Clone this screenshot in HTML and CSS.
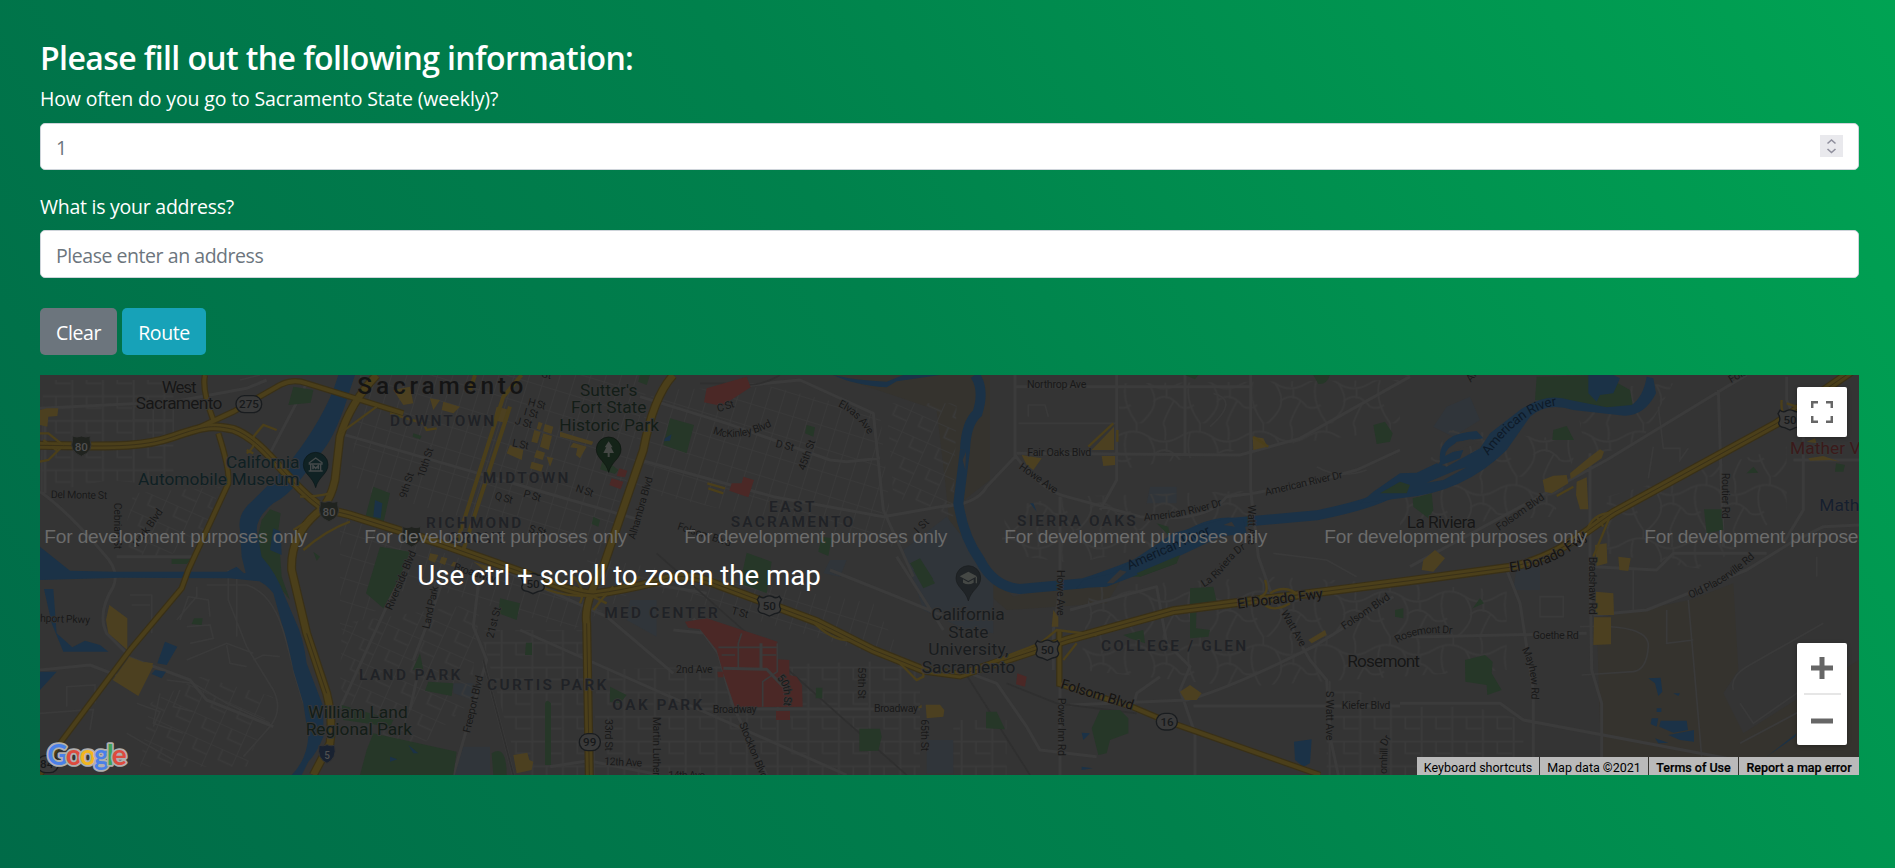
FILE: index.html
```html
<!DOCTYPE html>
<html lang="en">
<head>
<meta charset="utf-8">
<title>Commute survey</title>
<link rel="stylesheet" href="styles.css">
</head>
<body>
<main class="page">
  <h2 class="title">Please fill out the following information:</h2>
  <form class="form">
    <label class="label" for="often">How often do you go to Sacramento State (weekly)?</label>
    <div class="field">
      <input class="input" id="often" type="text" placeholder="1">
      <svg class="spinner" viewBox="0 0 23 22"><path d="M7.500 8.500 11.500 5l4 3.500M7.500 14l4 3.500 4-3.500"/></svg>
    </div>
    <label class="label second" for="address">What is your address?</label>
    <div class="field tall"><input class="input" id="address" type="text" placeholder="Please enter an address"></div>
    <div class="actions">
      <button class="btn btn-clear" type="button">Clear</button>
      <button class="btn btn-route" type="button">Route</button>
    </div>
  </form>
  <section class="map">
    <svg class="canvas" viewBox="0 15 5457 1200" preserveAspectRatio="none">
      <defs>
        <pattern id="grid" width="44" height="66" patternUnits="userSpaceOnUse" patternTransform="rotate(17)"><path class="st" d="M0 0H44M0 0V66"/></pattern>
        <pattern id="gridWide" width="92" height="74" patternUnits="userSpaceOnUse"><path class="st" d="M0 5H92M5 0V74M48 5V40H92"/></pattern>
        <pattern id="gridTilt" width="84" height="68" patternUnits="userSpaceOnUse" patternTransform="rotate(24)"><path class="st" d="M0 0H84M0 0V68M40 0V34H84"/></pattern>
        <pattern id="curvy" width="190" height="160" patternUnits="userSpaceOnUse"><path class="st" d="M0 40Q50 10 95 40T190 40M30 30Q10 90 60 160M60 0V25M95 40Q130 90 100 130T60 160M110 95Q150 60 190 110M0 110Q20 120 42 105M150 52V85M140 160Q150 130 172 92M140 0Q150 20 145 50"/></pattern>
        <g id="us50"><path class="shield" d="M-30-28Q-20-20-10-27 0-32 10-27 20-20 30-28L36-18Q26-4 34 10 34 22 16 24L0 31-16 24Q-34 22-34 10-26-4-36-18Z"/><text class="num" y="13" text-anchor="middle">50</text></g>
        <path id="inter" class="inter" d="M-27-30Q-13-24 0-30 13-24 27-30L26-20Q38 16 0 31-38 16-26-20Z"/>
        <g id="i80"><use href="#inter"/><text class="num on" y="14" text-anchor="middle">80</text></g>
        <path id="pin" d="M0 69C-8 36-37 28-37 0A37 37 0 0 1 37 0C37 28 8 36 0 69Z"/>
        <path id="mk" d="M2018 190Q2090 222 2204 164"/><path id="elvas" d="M2393 108Q2450 135 2485 194"/><path id="fif" d="M2210 925Q2240 950 2230 1006"/>
        <path id="ard" d="M3312 452Q3430 445 3550 405"/><path id="lar" d="M3492 652Q3530 630 3560 590T3620 535"/><path id="ar2" d="M4345 258Q4450 115 4555 106"/>
        <path id="eld" d="M4410 607Q4560 590 4652 492"/><path id="old" d="M4950 685Q5050 650 5150 558"/><path id="may" d="M4445 838Q4480 900 4473 990"/><path id="ros" d="M4072 820Q4130 780 4240 792"/>
      </defs>
      <rect class="land" y="15" width="5457" height="1200"/>

      <!-- tan and institutional ground -->
      <path class="tan" d="M2380 15H2850V330L2760 400 2790 560 2920 680 3260 600 3200 700 2900 720 2740 580 2715 330 2690 120ZM4670 745 4950 690 5080 640 5095 900 5050 970 5110 1090 5457 870V1215H4685Z"/>
      <path class="campus" d="M2590 540 2720 440 2860 620 2860 790 2780 780 2650 720ZM2370 570H2420L2400 620 2350 610ZM1240 940H1300V990L1240 970ZM1270 1130H1350V1215H1240ZM1770 690H1850V800L1760 750ZM4220 110 4290 80 4320 150 4240 200 4180 170ZM2660 1110H2740V1210H2660ZM3330 350H3410V400H3320ZM4430 590H4500V660H4420Z"/>

      <!-- neighbourhood streets -->
      <path fill="url(#grid)" d="M960 15H1830L1700 560 930 350ZM1840 60 2200 50 2520 130 2560 530 1740 350ZM900 440 1650 700 1640 560 2500 700 2600 880 1800 650 1660 740 1600 780 1120 640 900 800Z"/>
      <path fill="url(#gridWide)" d="M10 30H400V350L210 330 0 370ZM1320 780H1640V1215H1440ZM1670 900 2640 870V1215H1660ZM2740 1050H2900V1215H2740ZM4080 1010H4300L4450 1050V1215H3860V930Z"/>
      <path fill="url(#gridTilt)" d="M280 370 540 350 490 500 380 560 240 550ZM330 1000 480 920 700 980 620 1190 300 1190ZM905 760 1320 700 1290 1000 1060 1200 900 950ZM2540 100 2750 100 2740 440 2560 380Z"/>
      <path fill="url(#curvy)" d="M2900 410 3080 380 3700 360 3600 480 3100 580 2880 550ZM3240 40 4080 30 4080 180 3600 240 3230 300ZM3150 650 3700 620 4400 660 4400 900 3600 950 3120 900ZM4230 180 4620 210 4540 440 4080 470 4080 400ZM4700 380 5240 230 5240 420 5000 600 4700 550ZM4600 60 4900 40 4800 220 4640 260Z"/>
      <path class="st" d="M270 675H335V790M275 705H330M420 750 445 680 505 690 510 740M440 770 510 765 520 805 450 820M470 650V680L410 750M500 645H620Q700 670 735 800T760 900L790 1000M565 600V690L620 830 700 960Q730 1020 690 1070L610 1160M590 590V800M80 1010V950L165 945V1000M0 1030 160 1018 150 1080M380 930 460 940 560 1000 690 1060M420 960 400 1010 460 1025M360 970 340 1060 430 1090M290 1000 360 1025 340 1070M260 1090 400 1170M440 870 560 820 640 850M560 825 570 880 620 890M720 860 670 855 640 870M600 30 660 15M280 110H400V205M275 150H400M340 110V205"/>
      <path class="st" d="M2935 160H3230M2965 140V105H3015L3025 140M3700 550 3860 570 3950 620M3980 300Q3900 330 3830 290M3520 70Q3600 90 3510 170M4855 110 4870 235H4920V270L4945 235M4840 230 4825 325M4780 600V720M4945 690 4985 1160M4880 720V820L4960 810M4620 770Q4830 760 4825 830T4780 905L4625 915M4500 680H4570V740H4500ZM5080 960Q5070 920 5120 890L5350 760M5100 1000 5140 1060 5400 880M5100 1120 5400 960M5330 620V560"/>

      <!-- arterial roads -->
      <path class="rd" d="M0 115 400 95 620 55 680 30M0 365Q80 420 190 550 240 600 220 650 170 730 200 790L260 850M0 900 150 885 240 920M230 560H460M260 860 370 900 450 930 500 990 700 1070M15 110V370M800 40 690 250M1240 1215 1340 870 1300 770 1320 600M900 1015 1090 600M1120 870 1170 740 1220 600M1110 1020 1140 880M1330 870 1420 1215M1440 780 2420 1215M1300 560 1700 740 1900 910M1960 745 2035 850 2080 1010 2180 1215M900 190 1800 450M1820 640 2000 670M1900 780 2100 800M1980 1017H2640M1530 1190 1660 1170M1660 1175 1860 1215M2000 60 2180 40 2280 30 2500 130 2530 420 2620 620M1800 270 2200 380 2530 440 2730 405M2370 600 2570 680 2740 750M2570 560 2710 780M1800 80 2060 160 2370 270 2420 275 2520 265"/>
      <path class="rd" d="M2925 15V260L2840 350Q2810 405 2700 410M2925 50H3635M2930 250 3600 255 3780 205 4110 20M3230 15V330L3180 420M3435 15V250M3632 15V360L3655 560 3690 660 3810 870 3860 930 3870 1100 3895 1215M2925 255Q3000 360 3080 380L3300 440Q3500 460 3560 380L3640 370 3800 340 3950 300 4080 240M3060 380V660L3040 780V900M3060 940V1215M2720 900 2790 910 2870 940 2960 1070 3000 1140 3170 1160M3090 1005 3440 990Q3560 960 3820 830L4060 680M3460 1008H4080M3090 720 3350 650 3380 820 3450 890 3420 960 3465 1090V1215M3280 1010 3290 970 3360 920M4040 0 4110 15M4110 590 4700 270 5060 50 5120 15M4400 600 4440 700 4480 960V1215M4080 800 4160 800 4640 790M4650 250V560L4655 900 4685 1000V1215M4080 1000H4380L4450 1050 5060 1165M4660 735 4820 720 5120 600 5250 520 5350 470 5457 465M4660 590 4850 600 4900 550H5180M5035 60 5050 530M5240 20V90L5290 200V420L5230 520M5260 270H5457"/>
      <path class="rail" d="M1330 870 1420 1215M1980 40H2050Q2150 60 2220 15M2770 900 2970 1215M2900 940 3050 1000 3290 1030M1850 550 2600 1215"/>

      <!-- parks -->
      <path class="park" d="M760 50 820 60 812 98 745 105ZM690 418 722 430 715 480 725 620 750 690 710 640 645 540 665 450ZM395 567H455L440 582H395ZM462 745 488 745 485 765 455 762ZM820 545 840 560 830 572ZM1000 350 1050 370 1030 460 975 445ZM1120 190 1145 198 1140 208 1118 200ZM1020 530 1110 545 1080 620 1030 715 978 670ZM1690 265 1735 300 1725 312 1680 298ZM1380 685 1440 700 1430 750 1375 730ZM1458 818H1476V855H1455ZM1140 850 1118 900 1150 900ZM1165 935 1240 940 1235 978 1155 962ZM1515 1000Q1520 985 1533 1000V1185H1515ZM1000 1090 1250 1145 1240 1215H960L980 1140ZM905 1005 1060 1050 1050 1070 910 1050ZM1355 1150Q1400 1120 1400 1215H1360ZM1710 950 1760 975 1740 1000 1710 995ZM1660 440 1680 450 1675 470 1655 462ZM1890 145 1962 165 1940 250 1870 225ZM2300 165 2325 172 2320 200 2295 190ZM2345 500 2375 505 2365 558 2335 545ZM2120 548 2195 575 2180 670 2100 640ZM2328 953H2347V985H2327ZM2458 1076H2520L2525 1100 2515 1142 2458 1144ZM2610 580 2640 565 2680 628 2640 628ZM2620 600 2660 600 2685 640 2650 655ZM1800 15H1830L1820 45 1795 35ZM3435 15H3475L3465 28ZM3820 15H3870Q3860 45 3835 42ZM4000 165 4035 155 4058 190 4050 215 4010 222ZM3350 460 3385 470 3390 500ZM3450 655 3520 650 3530 695 3470 700 3468 775 3510 780 3505 800 3450 805ZM3250 795 3310 780 3315 820 3270 805ZM2838 1025H2870L2895 1078 2838 1075ZM3180 1020H3240L3265 1045 3265 1090 3210 1110 3200 1150 3175 1155 3155 1075ZM3270 620 3400 560 3410 580 3300 620ZM4490 20 4690 15 4770 60 4780 115 4720 130 4580 95 4485 90ZM4118 385 4175 370 4180 420 4165 445 4120 410ZM4540 180 4580 168 4602 210 4537 210ZM4992 418H5045L5050 480 5000 490ZM5120 310 5140 290 5155 308ZM5388 280 5415 285 5410 305H5385ZM4298 715 4320 685 4332 700ZM4275 870 4335 855 4358 875 4355 910 4385 960 4342 975 4340 945 4276 935ZM4065 720 4090 715V745L4065 740Z"/>

      <!-- water -->
      <path class="water" d="M895 15H945L930 60Q890 190 850 240L780 330Q740 380 700 400 650 440 650 480L665 560Q710 610 735 680L765 750Q790 800 800 880L850 1010V1100Q830 1150 805 1175L785 1215H755Q800 1170 805 1100L790 1000 760 900Q740 800 725 760L700 670Q670 630 620 620L605 560 600 480Q590 430 640 390L730 300Q830 180 880 60ZM0 530L90 602 220 605 560 605 590 590 612 610 680 600 670 635 570 625 240 623 0 630ZM12 657H40L50 790 97 832 135 812 180 825 205 845H70L35 760ZM375 815 412 830 380 885 352 880ZM345 900 378 905 365 925 335 912ZM0 905H50L0 960ZM1005 390 1027 400 1022 445 1000 440ZM700 475 722 485 725 555 690 540ZM1875 205 1895 193 1890 212 1872 214ZM1105 1125 1135 1150 1120 1150ZM1050 1160 1072 1168 1050 1175ZM3125 1088 3150 1090 3130 1110ZM3125 1190 3158 1195 3125 1200ZM3762 1115 3815 1108 3810 1180 3790 1190 3765 1170ZM4825 925 4862 923 4867 965 4855 978 4845 940ZM4850 1015H4864V1026H4850ZM4835 1045 4855 1045 4850 1070 4832 1062ZM4862 1052 4940 1052 4944 1080 4900 1088 4858 1070ZM4885 1095 4962 1080 4962 1115 4920 1110ZM4845 1105 4885 1118 4855 1120ZM4900 970H4920L4915 978ZM5180 1160 5270 1090 5265 1100ZM2970 400 2980 400 2990 425ZM4645 15H4720L4740 25 4720 70 4680 75 4670 95 4645 70ZM2380 15Q2450 32 2540 35L2590 15H2700L2570 34 2540 52Q2440 45 2380 15Z"/>
      <path class="river" d="M2805 15Q2835 60 2812 130 2778 160 2775 240L2755 400Q2770 500 2820 570 2860 650 2940 657L3130 640Q3280 590 3370 545 3490 450 3580 458L3830 436Q3960 410 4030 380L4110 350"/>
      <path class="water" d="M4000 365 4080 310 4130 308 4190 280 4220 290 4320 235 4350 190 4440 120Q4520 65 4590 90L4700 112 4775 105Q4810 80 4820 20L4840 25 4848 70Q4810 145 4740 136L4600 120Q4520 95 4470 140L4400 240Q4270 370 4080 385L3960 400ZM4200 275Q4190 190 4310 183L4330 205 4250 215 4215 250 4270 240 4260 265 4190 290ZM3130 630 3220 610 3400 490 3560 445 3610 450 3620 490 3540 500 3330 600 3200 650 3110 655Z"/>
      <path class="land" d="M4215 258Q4220 220 4290 208L4330 215 4250 240ZM4160 338 4250 300 4280 292 4210 330ZM3550 465 3575 455 3585 470ZM3200 640 3240 600 3260 605 3220 640ZM2768 270 2778 245 2776 300Z"/>
      <path class="park" d="M3290 610 3420 555 3410 580 3300 620ZM4020 370 4080 335 4110 345 4100 370Z"/>

      <!-- commercial and hospital blocks -->
      <path class="shop" d="M20 115 55 115 52 138 25 140 22 170 0 165 0 120ZM208 705 262 745V840L205 790 198 750ZM268 860 340 888 295 978 218 930ZM310 875 340 880 335 890ZM1060 60 1110 50 1120 100 1090 105ZM1170 85 1200 90 1180 120ZM1210 95 1260 110 1240 130 1205 120ZM1370 110 1410 120 1400 160 1360 150ZM1496 155 1508 160 1500 180 1490 176ZM1515 162 1540 170 1534 192 1510 184ZM1483 180 1502 186 1492 220 1474 215ZM1510 190 1536 198 1526 240 1500 230ZM1410 225 1450 240 1445 270 1400 250ZM1490 240 1515 248 1508 270 1482 262ZM1520 260 1540 264 1530 290ZM1475 275 1510 285 1504 305 1470 295ZM1560 185 1660 215 1655 225 1560 200ZM1600 218 1640 230 1620 265 1608 255 1612 235 1590 232ZM1170 550 1195 555 1185 578 1165 570ZM1205 560 1222 565 1215 585 1198 578ZM1240 575 1250 577 1245 590 1232 588ZM1300 575 1350 590 1340 605ZM1420 1155 1462 1148 1468 1170 1480 1175 1475 1200 1430 1210ZM2635 1010 2645 1004V1014H2635ZM2657 1004H2700L2713 1020 2710 1040 2660 1045ZM3155 240 3222 170V240ZM3185 258H3225V285L3190 288ZM2945 255 3005 265 2980 300 2960 285ZM3638 200 3670 205 3682 230 3640 240ZM3035 770 3040 720 3055 740V770ZM3420 965 3450 945 3485 970 3470 990 3435 990ZM3805 810 3855 780 3860 795 3815 820ZM4508 330 4540 317 4580 315 4585 340 4535 370 4515 365ZM4590 310 4650 260 4680 238 4692 245 4685 265 4620 310 4592 328ZM4610 335 4640 322 4645 418 4620 418 4608 375ZM4150 570 4185 540 4215 565 4180 605 4145 600ZM4665 525 4700 520 4702 580 4670 588ZM4735 560 4772 565 4765 603 4738 600ZM4668 665 4720 670 4722 735H4665ZM4662 742H4713V823L4660 825ZM5305 265 5350 258 5400 275 5370 270 5310 272ZM5300 215 5325 205 5330 220Z"/>
      <path class="med" d="M2000 55 2120 20 2132 52 2045 108 1992 97ZM2110 320 2142 330 2125 382 2068 362 2075 340 2105 340ZM1738 295 1762 302 1755 322 1730 318ZM1715 325 1750 335 1742 358 1708 345ZM1935 755 2000 745 2212 815V868L2248 870V915L2270 920 2286 945 2288 1010 2085 1012 2050 910 2030 840 1980 778 1945 773ZM2208 1023H2250V1050H2208ZM2032 905H2050V922H2034ZM2932 910 2960 920 2955 950 2928 943Z"/>
      <path class="st" d="M2035 832 2210 832M2095 895V820L2105 790M2045 855H2085M2168 1010V935L2212 905V820M2165 855H2208"/>
      <path class="rd" d="M2050 895 2180 898 2230 950M2163 820V895"/>

      <!-- highways -->
      <g>
        <path class="cas" d="M0 226C200 228 300 235 400 200S520 165 580 178C680 215 740 340 850 415L930 435 1200 520 1460 612Q1600 670 1660 672 1750 660 1850 635 1920 605 2000 632L2330 755 2500 840 2650 900 2760 915 3080 810 3400 722 4110 632 4410 592C4560 560 4640 480 4720 428L5210 160 5440 0M1010 15Q930 100 900 200L885 330Q870 400 830 430 750 500 755 600L800 790 860 970Q880 1050 870 1120L820 1215M1900 15Q1840 80 1810 240L1690 590Q1630 700 1640 760L1648 1215"/>
        <path class="cas thin" d="M495 15Q485 60 520 150M440 190 580 125 720 45Q760 25 800 40L930 80 1090 130M535 190Q570 300 565 340L445 600 425 655 270 840 60 1120 0 1215M3058 780V942L3280 1012 3370 1050 3840 1215"/>
        <path class="hwy" d="M0 226C200 228 300 235 400 200S520 165 580 178C680 215 740 340 850 415L930 435 1200 520 1460 612Q1600 670 1660 672 1750 660 1850 635 1920 605 2000 632L2330 755 2500 840 2650 900 2760 915 3080 810 3400 722 4110 632 4410 592C4560 560 4640 480 4720 428L5210 160 5440 0M1010 15Q930 100 900 200L885 330Q870 400 830 430 750 500 755 600L800 790 860 970Q880 1050 870 1120L820 1215M1900 15Q1840 80 1810 240L1690 590Q1630 700 1640 760L1648 1215"/>
        <path class="hwy thin" d="M495 15Q485 60 520 150M440 190 580 125 720 45Q760 25 800 40L930 80 1090 130M535 190Q570 300 565 340L445 600 425 655 270 840 60 1120 0 1215M3058 780V942L3280 1012 3370 1050 3840 1215M1305 15 1290 60M1445 15 1390 80 1250 520M1410 110 1270 540"/>
        <path class="ramp" d="M0 190H25L70 226 25 270 0 275M10 210 55 245M620 250Q650 230 640 200L670 165 710 180M620 240 640 250M780 380Q830 380 870 370M760 480 840 430M930 455Q860 480 790 540M1010 110 900 190M1620 700Q1640 660 1600 620M1660 720Q1690 680 1720 650M1600 650 1700 700M1490 645Q1640 720 1800 620M2320 755Q2380 820 2450 810M2570 870 2630 930 2650 920V880M2830 885 3000 820 3050 780 3170 795M3070 870 3110 820M3675 630Q3690 670 3660 680M3670 700Q3700 730 3750 700M3690 670Q3740 640 3780 680M4640 490Q4650 430 4720 428M4660 560 4710 440M4670 440 4690 470M1050 130 1150 160 1160 180 1190 175M5225 90Q5220 150 5260 130M2002 340 2055 355M2005 355 2050 370M5240 100 5270 110M3145 230 3220 160M3232 180V215M3640 200 3685 230M4550 378 4600 350"/>
        <path class="line" d="M0 226C200 228 300 235 400 200S520 165 580 178C680 215 740 340 850 415L930 435 1200 520 1460 612Q1600 670 1660 672 1750 660 1850 635 1920 605 2000 632L2330 755 2500 840 2650 900 2760 915 3080 810 3400 722 4110 632 4410 592C4560 560 4640 480 4720 428L5210 160 5440 0M800 790 860 970M1640 760 1648 1215"/>
      </g>

      <!-- pins and shields -->
      <g class="pins">
        <use href="#pin" x="827" y="284" class="p-teal"/><path class="ic" d="M808 278 827 264 846 278V282H808ZM812 284V303M842 284V303M806 303H848"/><path class="ic2" d="M819 298V287L827 295 835 287V298"/>
        <use href="#pin" x="1706" y="238" class="p-green"/><path class="glyph" d="M1706 214 1718 232H1713L1722 249H1709V261H1703V249H1690L1699 232H1694Z"/>
        <use href="#pin" x="2785" y="624" class="p-grey"/><path class="glyph" d="M2785 605 2811 619 2785 633 2759 619ZM2769 628V638Q2785 648 2801 638V628L2785 637ZM2807 621H2811V640H2807Z"/>
      </g>
      <rect class="shield" x="588" y="77" width="77" height="51" rx="25"/><text class="num" x="627" y="113" text-anchor="middle">275</text>
      <use href="#i80" x="124" y="228"/><use href="#i80" x="867" y="424"/><use href="#inter" x="1115" y="500"/>
      <path class="inter5" d="M837 1126Q850 1130 861 1124 874 1130 884 1126 892 1165 861 1180 830 1165 837 1126Z"/><text class="num on5" x="861" y="1166" text-anchor="middle">5</text>
      <use href="#us50" x="1479" y="640"/><use href="#us50" x="2188" y="707"/><use href="#us50" x="3022" y="840"/><use href="#us50" x="5250" y="149"/>
      <rect class="shield" x="1618" y="1091" width="63" height="51" rx="25"/><text class="num" x="1649" y="1128" text-anchor="middle">99</text>
      <rect class="shield" x="3349" y="1030" width="63" height="50" rx="25"/><text class="num" x="3381" y="1067" text-anchor="middle">16</text>
      <rect class="shield" x="-8" y="1157" width="63" height="51" rx="25"/><text class="num" x="20" y="1194" text-anchor="middle">84</text>

      <!-- place names -->
      <g class="place">
        <text x="365" y="68" textLength="105">West</text><text x="287" y="118" textLength="260">Sacramento</text>
        <g class="teal"><text x="558" y="294" textLength="220">California</text><text x="294" y="346" textLength="484">Automobile Museum</text></g>
        <g class="green"><text x="805" y="1045" textLength="298">William Land</text><text x="797" y="1095" textLength="319">Regional Park</text>
        <text x="1620" y="78" textLength="172">Sutter's</text><text x="1593" y="130" textLength="226">Fort State</text><text x="1558" y="182" textLength="299">Historic Park</text></g>
        <g class="dark"><text x="2674" y="750" textLength="220">California</text><text x="2725" y="803" textLength="120">State</text><text x="2665" y="855" textLength="240">University,</text><text x="2645" y="908" textLength="281">Sacramento</text></g>
        <text x="3922" y="891" textLength="218">Rosemont</text><text x="4100" y="473" textLength="208">La Riviera</text>
        <text class="red" x="5250" y="252" textLength="212">Mather V</text><text class="navy" x="5338" y="424" textLength="120">Math</text>
      </g>
      <text class="city" x="952" y="71" textLength="498">Sacramento</text>
      <g class="hood">
        <text x="1050" y="167" textLength="312">DOWNTOWN</text><text x="1328" y="338" textLength="257">MIDTOWN</text><text x="1158" y="473" textLength="286">RICHMOND</text><text x="1225" y="518" textLength="170">GROVE</text>
        <text x="1693" y="744" textLength="340">MED CENTER</text><text x="957" y="930" textLength="304">LAND PARK</text><text x="1341" y="960" textLength="358">CURTIS PARK</text><text x="1717" y="1020" textLength="270">OAK PARK</text>
        <text x="2187" y="427" textLength="136">EAST</text><text x="2072" y="471" textLength="367">SACRAMENTO</text><text x="2931" y="469" textLength="356">SIERRA OAKS</text><text x="3183" y="844" textLength="435">COLLEGE / GLEN</text>
      </g>
      <g class="street">
        <text transform="translate(32 384) rotate(1)" textLength="170">Del Monte St</text><text transform="translate(222 398) rotate(90)" textLength="140">Cebrian St</text><text transform="translate(295 532) rotate(-55)" textLength="130">Park Blvd</text><text transform="translate(0 755) rotate(2)" textLength="150">hport Pkwy</text>
        <text transform="translate(1462 105) rotate(15)" textLength="54">H St</text><text transform="translate(1450 134) rotate(15)" textLength="44">I St</text><text transform="translate(1423 161) rotate(15)" textLength="52">J St</text><text transform="translate(1415 228) rotate(12)" textLength="50">L St</text><text transform="translate(1503 20) rotate(15)" textLength="30">St</text>
        <text transform="translate(1152 325) rotate(-72)" textLength="92">10th St</text><text transform="translate(1098 386) rotate(-72)" textLength="78">9th St</text><text transform="translate(1605 364) rotate(18)" textLength="54">N St</text><text transform="translate(1448 380) rotate(16)" textLength="54">P St</text><text transform="translate(1362 386) rotate(16)" textLength="55">Q St</text><text transform="translate(1465 485) rotate(16)" textLength="52">S St</text>
        <text transform="translate(1785 510) rotate(-74)" textLength="194">Alhambra Blvd</text><text transform="translate(1055 722) rotate(-67)" textLength="190">Riverside Blvd</text><text transform="translate(1168 778) rotate(-78)" textLength="130">Land Park</text><text transform="translate(1240 600) rotate(17)" textLength="130">Broadway</text><text transform="translate(1360 806) rotate(-76)" textLength="95">21st St</text><text transform="translate(1290 1090) rotate(-77)" textLength="175">Freeport Blvd</text><text transform="translate(1694 1047) rotate(90)" textLength="96">33rd St</text><text transform="translate(1692 1184) rotate(3)" textLength="114">12th Ave</text>
        <text transform="translate(2035 127) rotate(-18)" textLength="52">C St</text><text transform="translate(2205 230) rotate(14)" textLength="56">D St</text><text transform="translate(2294 303) rotate(-70)" textLength="95">45th St</text><text transform="translate(1910 478) rotate(18)" textLength="168">Folsom Blvd</text><text transform="translate(2635 492) rotate(-45)" textLength="48">I St</text><text transform="translate(2072 731) rotate(15)" textLength="52">T St</text><text x="1908" y="910" textLength="110">2nd Ave</text><text transform="translate(2453 892) rotate(90)" textLength="95">59th St</text><text x="2018" y="1028" textLength="132">Broadway</text><text x="2502" y="1026" textLength="132">Broadway</text><text transform="translate(2642 1048) rotate(90)" textLength="96">65th St</text><text transform="translate(1838 1040) rotate(90)" textLength="178">Martin Luther</text><text transform="translate(2097 1062) rotate(68)" textLength="180">Stockton Blvd</text><text x="1885" y="1228" textLength="110">14th Ave</text>
        <text><textPath href="#mk" textLength="185">McKinley Blvd</textPath></text><text><textPath href="#elvas" textLength="128">Elvas Ave</textPath></text><text><textPath href="#fif" textLength="88">50th St</textPath></text>
        <text x="2961" y="55" textLength="178">Northrop Ave</text><text x="2962" y="259" textLength="192">Fair Oaks Blvd</text><text transform="translate(2935 295) rotate(35)" textLength="134">Howe Ave</text><text transform="translate(3677 377) rotate(-13)" textLength="238">American River Dr</text><text><textPath href="#ard" textLength="240">American River Dr</textPath></text><text transform="translate(3625 405) rotate(90)" textLength="120">Watt Ave</text><text><textPath href="#lar" textLength="172">La Riviera Dr</textPath></text><text transform="translate(3050 600) rotate(90)" textLength="137">Howe Ave</text><text transform="translate(3722 728) rotate(60)" textLength="120">Watt Ave</text><text transform="translate(3913 780) rotate(-34)" textLength="168">Folsom Blvd</text><text transform="translate(3055 983) rotate(90)" textLength="175">Power Inn Rd</text><text x="3905" y="1017" textLength="146">Kiefer Blvd</text><text transform="translate(3858 963) rotate(90)" textLength="148">S Watt Ave</text><text transform="translate(4040 1212) rotate(-88)" textLength="78">ornhill</text><text transform="translate(4038 1130) rotate(-60)" textLength="32">Dr</text>
        <text><textPath href="#ros" textLength="170">Rosemont Dr</textPath></text><text transform="translate(4378 483) rotate(-35)" textLength="168">Folsom Blvd</text><text transform="translate(4648 560) rotate(90)" textLength="174">Bradshaw Rd</text><text><textPath href="#old" textLength="232">Old Placerville Rd</textPath></text><text transform="translate(5045 308) rotate(90)" textLength="138">Routier Rd</text><text x="4478" y="807" textLength="138">Goethe Rd</text><text><textPath href="#may" textLength="155">Mayhew Rd</textPath></text><text transform="translate(4292 38) rotate(-50)" textLength="32">Ar</text><text transform="translate(5073 40) rotate(-30)" textLength="58">Fols</text>
      </g>
      <g class="major"><text transform="translate(3593 716) rotate(-7)" textLength="258">El Dorado Fwy</text><text transform="translate(3060 954) rotate(17)" textLength="226">Folsom Blvd</text><text><textPath href="#eld" textLength="262">El Dorado Fwy</textPath></text></g>
      <g class="flow"><text transform="translate(3268 600) rotate(-24)" textLength="268">American River</text><text><textPath href="#ar2" textLength="262">American River</textPath></text></g>

      <g class="dev">
        <text x="13" y="518" textLength="789">For development purposes only</text><text x="973" y="518" textLength="789">For development purposes only</text><text x="1933" y="518" textLength="789">For development purposes only</text><text x="2893" y="518" textLength="789">For development purposes only</text><text x="3853" y="518" textLength="789">For development purposes only</text><text x="4813" y="518" textLength="789">For development purposes only</text>
      </g>
      <text class="hint" x="1132" y="644" textLength="1210">Use ctrl + scroll to zoom the map</text>
      <text class="logo" x="22" y="1186" textLength="238"><tspan fill="#4a80e8">G</tspan><tspan fill="#dd4b3e">o</tspan><tspan fill="#f2b51d">o</tspan><tspan fill="#4a80e8">g</tspan><tspan fill="#3da257">l</tspan><tspan fill="#dd4b3e">e</tspan></text>
    </svg>
    <button class="ctl full" type="button" aria-label="Fullscreen"><svg viewBox="0 0 22 22"><path d="M1.200 7V1.200H7M15 1.200h5.800V7M20.800 15v5.800H15M7 20.800H1.200V15"/></svg></button>
    <div class="ctl zoom">
      <svg viewBox="0 0 22 22"><path d="M0 11H22M11 0V22"/></svg>
      <i></i>
      <svg viewBox="0 0 22 22"><path d="M0 11H22"/></svg>
    </div>
    <div class="legal"><span class="k">Keyboard shortcuts</span><span class="d">Map data ©2021</span><b class="t">Terms of Use</b><b class="r">Report a map error</b></div>
  </section>
</main>
</body>
</html>
```
FILE: styles.css
```css
* { box-sizing: border-box; }
body { margin: 0; height: 868px; overflow: hidden; font: 20px/30px "Open Sans", "Noto Sans", sans-serif; color: #fff; background: linear-gradient(60deg, #006b48, #00814c 50%, #00a353); }
.page { padding: 38px 36px 0 40px; display: flex; flex-direction: column; }
.title { margin: 0 0 5px; font-size: 32px; font-weight: 600; line-height: 40px; letter-spacing: -0.6px; white-space: nowrap; }
.form { display: flex; flex-direction: column; }
.label { height: 30px; margin-bottom: 10px; font-size: 19.500px; letter-spacing: -0.15px; line-height: 31px; }
.label.second { line-height: 33px; letter-spacing: -0.25px; }
.field { position: relative; height: 47px; margin-bottom: 20px; }
.field.tall, .tall .input { height: 48px; }
.input { display: block; width: 100%; height: 47px; padding: 2px 15px 0; border: 1px solid #ced4da; border-radius: 5px; background: #fff; font: 19.500px "Open Sans", sans-serif; letter-spacing: -0.45px; }
.input::placeholder { color: #6c757d; opacity: 1; }
.spinner { position: absolute; right: 16px; top: 12px; width: 23px; height: 22px; background: #e9e9ed; fill: none; stroke: #8f8f9d; stroke-width: 1.600; }
.actions { display: flex; gap: 5px; margin: 10px 0 20px; }
.btn { height: 47px; padding: 2px 0 0; border: 0; border-radius: 5px; color: #fff; font: 19.500px "Open Sans", sans-serif; letter-spacing: -0.4px; }
.btn-clear { width: 77px; background: #6c757d; }
.btn-route { width: 84px; background: #17a2b8; }
.map { position: relative; height: 400px; overflow: hidden; }
.canvas { display: block; width: 100%; height: 400px; font-family: Roboto, sans-serif; }
.land { fill: #343434; }
.tan { fill: #35332e; }
.campus { fill: #30353a; }
.park { fill: #263728; }
.water { fill: #1b3247; }
.river { fill: none; stroke: #1b3247; stroke-width: 30; }
.shop { fill: #4c4020; }
.med { fill: #4b2826; }
.st { fill: none; stroke: #3a3a3a; stroke-width: 5; }
.rd { fill: none; stroke: #3b3b3b; stroke-width: 9; stroke-linejoin: round; }
.rail { fill: none; stroke: #2f2f2f; stroke-width: 5; }
.cas { fill: none; stroke: #393017; stroke-width: 27; }
.hwy { fill: none; stroke: #4b3f1a; stroke-width: 20; }
.cas.thin { stroke-width: 19; }
.hwy.thin { stroke-width: 12; }
.ramp { fill: none; stroke: #4b3f1a; stroke-width: 7; }
.line { fill: none; stroke: #393017; stroke-width: 3; }
.shield { fill: #3a3a3a; stroke: #191c1f; stroke-width: 4; }
.inter { fill: #20231f; stroke: #343434; stroke-width: 3; }
.inter5 { fill: #192231; stroke: #343434; stroke-width: 3; }
.num { font-size: 35px; font-weight: 500; fill: #17191b; }
.num.on { fill: #505050; }
.num.on5 { font-size: 30px; fill: #505050; }
.p-teal { fill: #102224; stroke: #0b1718; stroke-width: 2; }
.p-green { fill: #142318; stroke: #0c140e; stroke-width: 2; }
.p-grey { fill: #202427; stroke: #191c1e; stroke-width: 2; }
.ic { fill: none; stroke: #44494a; stroke-width: 4; }
.ic2 { fill: none; stroke: #44494a; stroke-width: 5; }
.glyph { fill: #454845; }
.canvas text { white-space: pre; }
.place text, .street text, .hood text, .major text { paint-order: stroke; stroke: #363636; stroke-width: 6; stroke-linejoin: round; }
.place text { font-size: 52px; fill: #161616; }
.place .teal text { fill: #0f2023; }
.place .green text { fill: #131d17; }
.place .dark text { fill: #191c1e; }
.place text.red { fill: #3a1a1a; }
.place text.navy { fill: #161f2e; }
.city { font-size: 73px; font-weight: 500; fill: #141414; }
.hood text { font-size: 46px; font-weight: 600; fill: #202226; stroke-width: 4; }
.street text { font-size: 32px; fill: #191919; stroke-width: 4; }
.major text { font-size: 42px; fill: #151310; stroke-width: 4; }
.flow text { font-size: 40px; fill: #0e1a28; }
.dev text { font: 57.500px "Liberation Sans", Arial, sans-serif; fill: #6b6b6b; }
.hint { font-size: 83px; fill: #fff; }
.logo { font-family: Lato, sans-serif; font-size: 84px; font-weight: 700; paint-order: stroke; stroke: #b0b0b0; stroke-width: 11; stroke-linejoin: round; }
.ctl { position: absolute; right: 12px; width: 50px; padding: 0; border: 0; border-radius: 2px; background: #fff; display: flex; flex-direction: column; align-items: center; box-shadow: 0 1px 4px rgba(0, 0, 0, .3); }
.ctl svg { width: 22px; height: 22px; fill: none; stroke: #666; }
.full { top: 12px; height: 50px; justify-content: center; }
.full svg { stroke-width: 2.500; }
.zoom { top: 268px; height: 102px; padding-top: 14px; }
.zoom svg { stroke-width: 5; }
.zoom i { width: 37px; height: 2px; margin: 14px 0 15px; background: #e6e6e6; }
.legal { position: absolute; right: 0; bottom: 0; height: 18px; display: flex; gap: 1px; font: 12.500px/21px Roboto, sans-serif; color: #000; white-space: nowrap; }
.legal > * { height: 18px; text-align: center; background: #bababa; overflow: hidden; }
.legal b { font-weight: 500; -webkit-text-stroke: .2px #000; }
.k { width: 122px; }
.d { width: 108px; }
.t { width: 89px; }
.r { width: 120px; }
```
